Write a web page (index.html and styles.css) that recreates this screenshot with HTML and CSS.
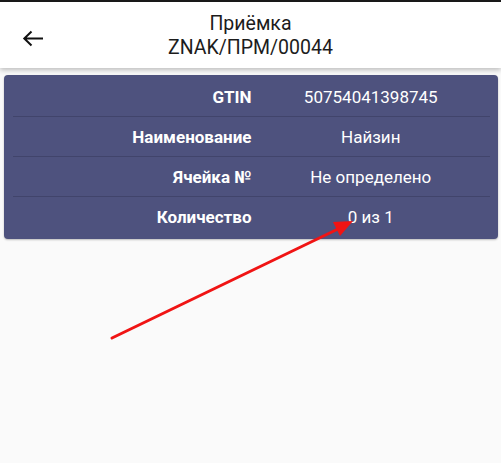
FILE: index.html
```html
<!DOCTYPE html>
<html lang="ru">
<head>
<meta charset="utf-8">
<link rel="stylesheet" href="styles.css">
</head>
<body>
<div class="screen">
  <div class="topbar"></div>
  <header class="header">
    <button class="back" aria-label="Назад">
      <svg width="24" height="20" viewBox="0 0 24 20"><path d="M22 9.5H3.5M10.5 2.5L3.3 9.5l7.2 7" fill="none" stroke="#111" stroke-width="2"/></svg>
    </button>
    <div class="title">
      <div>Приёмка</div>
      <div>ZNAK/ПРМ/00044</div>
    </div>
  </header>
  <main class="content">
    <section class="card">
      <div class="row"><div class="label">GTIN</div><div class="value">50754041398745</div></div>
      <div class="row"><div class="label">Наименование</div><div class="value">Найзин</div></div>
      <div class="row"><div class="label">Ячейка №</div><div class="value">Не определено</div></div>
      <div class="row"><div class="label">Количество</div><div class="value">0 из 1</div></div>
    </section>
  </main>
  <svg class="pointer" width="501" height="463" viewBox="0 0 501 463">
    <line x1="112" y1="338" x2="338" y2="229" stroke="#f01414" stroke-width="3" stroke-linecap="round"/>
    <polygon points="353,221 333,222 340,236" fill="#f01414"/>
  </svg>
</div>
</body>
</html>
```
FILE: styles.css
```css
html, body {
  margin: 0;
  padding: 0;
}
body {
  font-family: Roboto, "Noto Sans", sans-serif;
  background: #fafafa;
  width: 501px;
  height: 463px;
  overflow: hidden;
}
.screen {
  position: relative;
  width: 501px;
  height: 463px;
  background: #fafafa;
}
.topbar {
  height: 2px;
  background: #1a1a1a;
}
.header {
  position: relative;
  height: 66px;
  background: #fff;
  display: flex;
  align-items: center;
  justify-content: center;
  box-shadow: 0 2px 5px rgba(0,0,0,0.25);
  z-index: 1;
}
.back {
  position: absolute;
  left: 21px;
  top: 27px;
  width: 24px;
  height: 20px;
  padding: 0;
  border: 0;
  background: none;
  display: flex;
}
.title {
  text-align: center;
  font-size: 19.5px;
  line-height: 24px;
  color: #1c1c1c;
  margin-top: 1px;
}
.content {
  padding: 7px 3px 0 4px;
}
.card {
  background: #4e527e;
  border-radius: 4px;
  padding: 2px 8px 2px 9px;
  box-shadow: 0 1px 2px rgba(0,0,0,0.25);
  color: #fff;
}
.row {
  display: grid;
  grid-template-columns: 1fr 1fr;
  align-items: center;
  height: 39px;
  border-bottom: 1px solid #41446b;
}
.row:last-child {
  border-bottom: 0;
  height: 40px;
}
.label {
  text-align: right;
  font-weight: 700;
  font-size: 17px;
}
.value {
  text-align: center;
  font-size: 17px;
}
.pointer {
  position: absolute;
  left: 0;
  top: 0;
  pointer-events: none;
  z-index: 2;
}
```
